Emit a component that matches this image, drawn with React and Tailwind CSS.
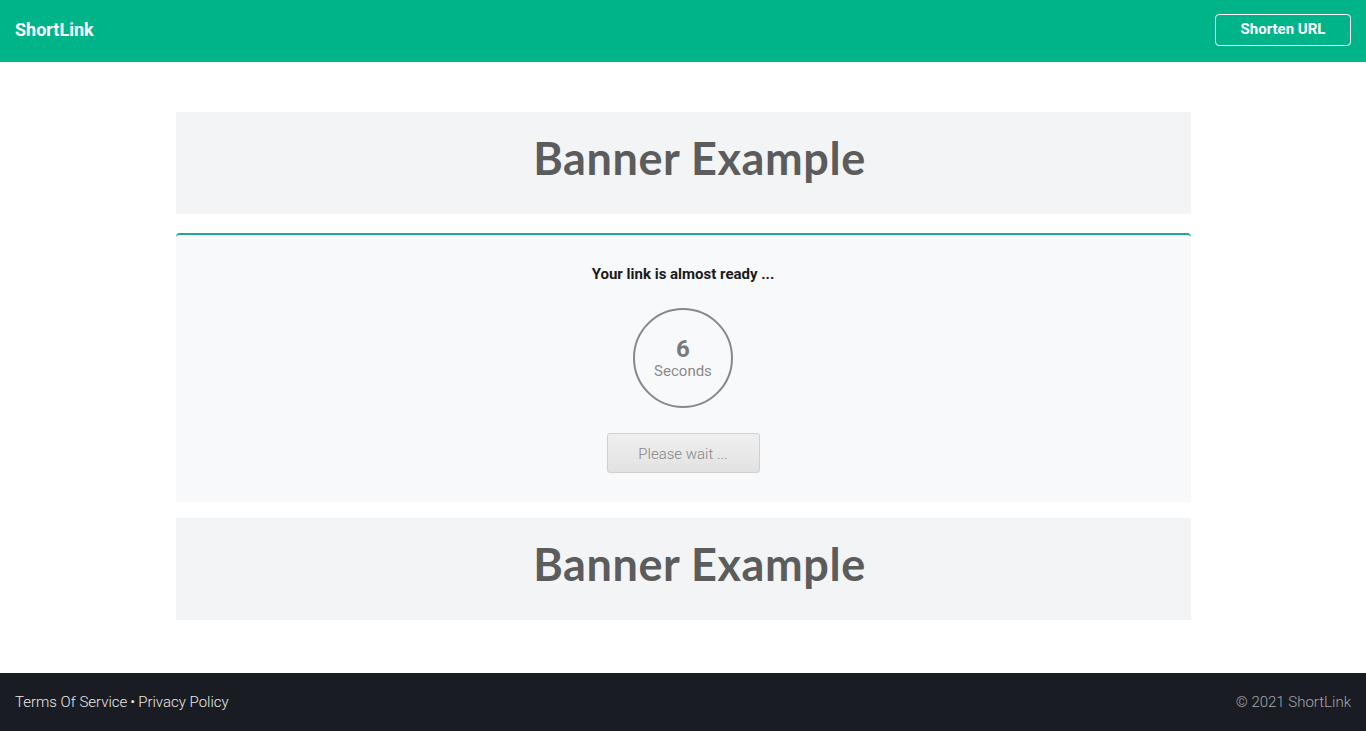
import React from "react";

const Banner = () => (
  <div className="w-full h-[102px] bg-[#f3f4f6] flex items-center justify-center">
    <span
      className="pl-[33px] pb-[8px] text-[45px] font-bold text-[#5c5c5c] tracking-[0.6px]"
      style={{ fontFamily: '"Lato", "Open Sans", sans-serif' }}
    >
      Banner Example
    </span>
  </div>
);

const App = () => {
  return (
    <div
      className="min-h-[731px] flex flex-col bg-white"
      style={{ fontFamily: 'Roboto, "Liberation Sans", sans-serif' }}
    >
      {/* header */}
      <header className="h-[62px] bg-[#00b48a] flex items-center justify-between px-[15px] pb-[3px]">
        <a className="text-white text-[18px] font-bold">ShortLink</a>
        <button className="h-[32px] w-[136px] border border-white rounded-[4px] text-white text-[15px] font-bold">
          Shorten URL
        </button>
      </header>

      <main className="flex-1 flex flex-col items-center pt-[50px] pb-[53px]">
        <div className="w-[1015px] flex flex-col">
          <Banner />

          <div className="mt-[19px] mb-[16px] bg-[#f8f9fb] border-t-2 border-[#20a891] rounded-t-[4px] flex flex-col items-center pt-[29px] pb-[29px]">
            <p className="text-[15px] font-bold text-[#1a1a1a] leading-[20px]">
              Your link is almost ready ...
            </p>
            <div className="mt-[24px] w-[100px] h-[100px] rounded-full border-2 border-[#888888] flex flex-col items-center justify-center">
              <span className="text-[24px] font-bold text-[#7a7a7a] leading-[26px] mt-[-1px]">6</span>
              <span className="text-[15px] text-[#8a8a8a] leading-[18px]">Seconds</span>
            </div>
            <button className="mt-[25px] w-[153px] h-[40px] pt-[2px] rounded-[3px] border border-[#d0d0d0] bg-gradient-to-b from-[#f0f0f0] to-[#e2e2e2] text-[15px] text-[#858585] font-light">
              Please wait ...
            </button>
          </div>

          <Banner />
        </div>
      </main>

      <footer className="h-[58px] bg-[#1a1c23] flex items-center justify-between px-[15px] text-[15px] font-light">
        <div className="text-[#e8e8e8]">
          <a>Terms Of Service</a>
          <span className="mx-[3px]">•</span>
          <a>Privacy Policy</a>
        </div>
        <div className="text-[#a8a8a8]">© 2021 ShortLink</div>
      </footer>
    </div>
  );
};

export default App;
